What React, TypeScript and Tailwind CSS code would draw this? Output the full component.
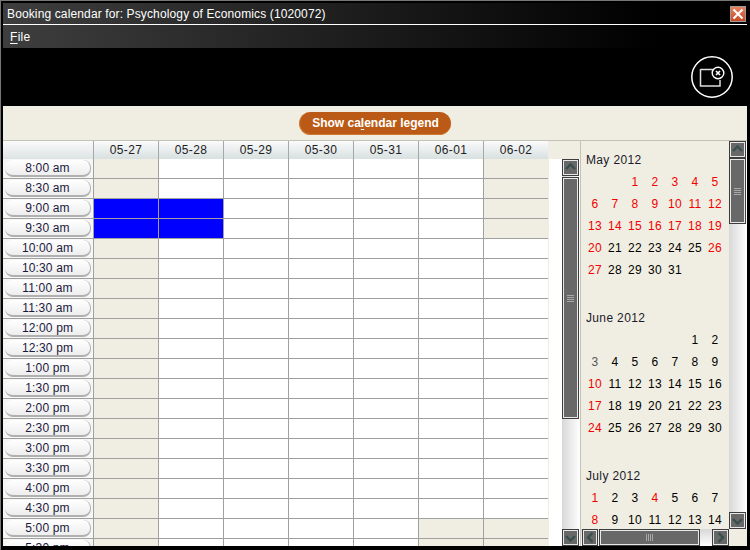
const days = ["05-27", "05-28", "05-29", "05-30", "05-31", "06-01", "06-02"];

const times = [
  "8:00 am", "8:30 am", "9:00 am", "9:30 am", "10:00 am", "10:30 am", "11:00 am", "11:30 am",
  "12:00 pm", "12:30 pm", "1:00 pm", "1:30 pm", "2:00 pm", "2:30 pm", "3:00 pm", "3:30 pm",
  "4:00 pm", "4:30 pm", "5:00 pm", "5:30 pm",
];

const months = [
  { title: "May 2012", start: 2, count: 31, red: [1, 2, 3, 4, 5, 6, 7, 8, 9, 10, 11, 12, 13, 14, 15, 16, 17, 18, 19, 20, 26, 27], gray: [] as number[] },
  { title: "June 2012", start: 5, count: 30, red: [10, 17, 24], gray: [3] },
  { title: "July 2012", start: 0, count: 14, red: [1, 4, 8], gray: [] as number[] },
];

const cellColor = (row: number, col: number) => {
  if (col < 2 && (row === 2 || row === 3)) return "bg-[#0000ff]";
  if (col === 0) return "bg-[#f0eee2]";
  if (col === 6 && row < 4) return "bg-[#f0eee2]";
  if (col >= 5 && row >= 18) return "bg-[#f0eee2]";
  return "bg-white";
};

const Arrow = ({ dir }: { dir: "up" | "down" | "left" | "right" }) => {
  const d = {
    up: "M2 8 L6.5 3.5 L11 8",
    down: "M2 5 L6.5 9.5 L11 5",
    left: "M8.5 2 L4 6.5 L8.5 11",
    right: "M4.5 2 L9 6.5 L4.5 11",
  }[dir];
  return (
    <svg width="13" height="13" viewBox="0 0 13 13" fill="none">
      <path d={d} stroke="#37504e" strokeWidth="2.4" />
    </svg>
  );
};

const ScrollButton = ({ dir, className }: { dir: "up" | "down" | "left" | "right"; className: string }) => (
  <div className={`flex shrink-0 items-center justify-center border border-[#3c3c3c] bg-[#686868] outline outline-1 -outline-offset-2 outline-[#e8e8e8] ${className}`}>
    <Arrow dir={dir} />
  </div>
);

const Grip = ({ vertical }: { vertical: boolean }) => (
  <div className={`flex gap-px ${vertical ? "flex-col" : "flex-row"}`}>
    {[0, 1, 2, 3].map((i) => (
      <div key={i} className={`bg-[#a8a8a8] ${vertical ? "h-px w-[7px]" : "h-[7px] w-px"}`} />
    ))}
  </div>
);

const Thumb = ({ className, vertical }: { className: string; vertical: boolean }) => (
  <div className={`flex items-center justify-center border border-[#3c3c3c] bg-[#686868] outline outline-1 -outline-offset-2 outline-[#e8e8e8] ${className}`}>
    <Grip vertical={vertical} />
  </div>
);

const Month = ({ month }: { month: (typeof months)[number] }) => (
  <div className="h-[158px] shrink-0">
    <div className="h-[21px] pl-[5px] pt-[1px] text-[12px] leading-[18px] tracking-[0.35px] text-[#1a1a2a]">{month.title}</div>
    <div className="grid grid-cols-[repeat(7,20px)] auto-rows-[22px] pl-[4px]">
      {Array.from({ length: month.start }).map((_, i) => (
        <div key={`blank-${i}`} />
      ))}
      {Array.from({ length: month.count }).map((_, i) => {
        const day = i + 1;
        const color = month.red.includes(day) ? "text-[#f00000]" : month.gray.includes(day) ? "text-[#555555]" : "text-black";
        return (
          <div key={day} className={`flex items-center justify-center text-[12px] tracking-[0.3px] ${color}`}>
            {day}
          </div>
        );
      })}
    </div>
  </div>
);

export default function App() {
  return (
    <div className="flex h-[550px] w-[750px] flex-col overflow-hidden border-l border-t border-[#777777] bg-black pb-[4px] pl-[2px] pr-[3px] pt-[2px] font-['Liberation_Sans',Arial,sans-serif] text-[12px]">
      <div className="flex h-[21px] shrink-0 items-center justify-between bg-[linear-gradient(to_right,#3e3e3e,#000_88%)] pl-[4px] pr-[1px] text-white">
        <span className="tracking-[0.13px]">Booking calendar for: Psychology of Economics (1020072)</span>
        <div className="flex h-[16px] w-[16px] items-center justify-center border border-[#9a9a9a] bg-[linear-gradient(to_bottom,#e8805c,#c84a24)]">
          <svg width="12" height="12" viewBox="0 0 12 12">
            <path d="M1.5 1.5 L10.5 10.5 M10.5 1.5 L1.5 10.5" stroke="white" strokeWidth="2" />
          </svg>
        </div>
      </div>
      <div className="h-px shrink-0 bg-white" />
      <div className="flex h-[23px] shrink-0 items-center bg-[linear-gradient(to_right,#3e3e3e,#000_88%)] pl-[7px] text-white">
        <span className="tracking-[0.3px]">
          <span className="underline underline-offset-2">F</span>ile
        </span>
      </div>
      <div className="flex h-[58px] shrink-0 items-center justify-end bg-black pr-[13px]">
        <svg width="44" height="44" viewBox="0 0 44 44" fill="none">
          <circle cx="22" cy="22" r="20.2" stroke="white" strokeWidth="1.5" />
          <path d="M10.5 14.5 H23 M10.5 14 V31 H30 V25" stroke="#dddddd" strokeWidth="1.5" />
          <circle cx="28" cy="18" r="5.8" stroke="white" strokeWidth="1.4" />
          <path d="M26 16 L30 20 M30 16 L26 20" stroke="white" strokeWidth="1.6" />
        </svg>
      </div>
      <div className="flex min-h-0 flex-1 flex-col bg-[#f0eee2]">
        <div className="flex h-[35px] shrink-0 items-center justify-center border-b border-[#c4c2b6]">
          <div className="flex h-[23px] w-[152px] items-center justify-center rounded-full border-b border-l border-[#d07a30] bg-[#bb5a16] text-[12px] font-bold text-white">
            <span>
              Show ca<span className="underline underline-offset-2">l</span>endar legend
            </span>
          </div>
        </div>
        <div className="flex min-h-0 flex-1">
          <div className="flex min-h-0 w-[546px] shrink-0 flex-col overflow-hidden">
            <div className="flex h-[18px] shrink-0">
              <div className="w-[90px] shrink-0 bg-[linear-gradient(to_bottom,#fafbfb,#dde3e3)]" />
              {days.map((day) => (
                <div
                  key={day}
                  className="flex w-[65px] shrink-0 items-center justify-center border-l border-[#a8a8a8] bg-[linear-gradient(to_bottom,#fafbfb,#d8e0e0)] tracking-[0.4px] text-[#222222]"
                >
                  {day}
                </div>
              ))}
              <div className="w-px shrink-0" />
            </div>
            {times.map((time, row) => (
              <div key={time} className="flex h-[20px] shrink-0">
                <div className="flex w-[90px] shrink-0 items-center border-b border-[#a0a0a0] bg-[#f6f6f4] pl-[2px]">
                  <div className="flex h-[17px] w-[86px] items-center justify-center rounded-[8px] border-b-2 border-r border-[#b0b0b0] bg-[linear-gradient(to_bottom,#ffffff,#eeeeee)] pb-[1px] text-[12px] tracking-[0.15px] text-[#1a1a40]">
                    <span className="relative top-[1px]">{time}</span>
                  </div>
                </div>
                {days.map((day, col) => (
                  <div key={day} className={`w-[65px] shrink-0 border-b border-l border-[#a0a0a0] ${cellColor(row, col)}`} />
                ))}
              </div>
            ))}
          </div>
          <div className="flex w-[31px] shrink-0 flex-col">
            <div className="h-[18px] shrink-0" />
            <div className="flex min-h-0 flex-1 bg-white">
              <div className="w-[13px] shrink-0 bg-white" />
              <div className="flex w-[18px] shrink-0 flex-col bg-[linear-gradient(to_right,#d8d8d8,#ffffff)]">
                <ScrollButton dir="up" className="h-[17px] w-[17px]" />
                <Thumb vertical className="mt-[1px] h-[242px] w-[17px]" />
                <div className="flex-1" />
                <ScrollButton dir="down" className="h-[17px] w-[17px]" />
              </div>
            </div>
          </div>
          <div className="flex min-w-0 flex-1 flex-col border-l border-[#c4c2b6]">
            <div className="flex min-h-0 flex-1">
              <div className="min-h-0 w-[148px] shrink-0 overflow-hidden pt-[9px]">
                {months.map((month) => (
                  <Month key={month.title} month={month} />
                ))}
              </div>
              <div className="flex w-[18px] shrink-0 flex-col bg-[linear-gradient(to_right,#d8d8d8,#ffffff)]">
                <ScrollButton dir="up" className="h-[17px] w-[17px]" />
                <Thumb vertical className="h-[66px] w-[17px]" />
                <div className="flex-1" />
                <ScrollButton dir="down" className="h-[17px] w-[17px]" />
              </div>
            </div>
            <div className="flex h-[17px] shrink-0">
              <div className="flex w-[148px] shrink-0 bg-[linear-gradient(to_bottom,#d8d8d8,#ffffff)] pl-px">
                <ScrollButton dir="left" className="h-[17px] w-[16px]" />
                <Thumb vertical={false} className="ml-[1px] h-[17px] w-[101px]" />
                <div className="flex-1" />
                <ScrollButton dir="right" className="h-[17px] w-[17px]" />
              </div>
            </div>
          </div>
        </div>
      </div>
    </div>
  );
}
